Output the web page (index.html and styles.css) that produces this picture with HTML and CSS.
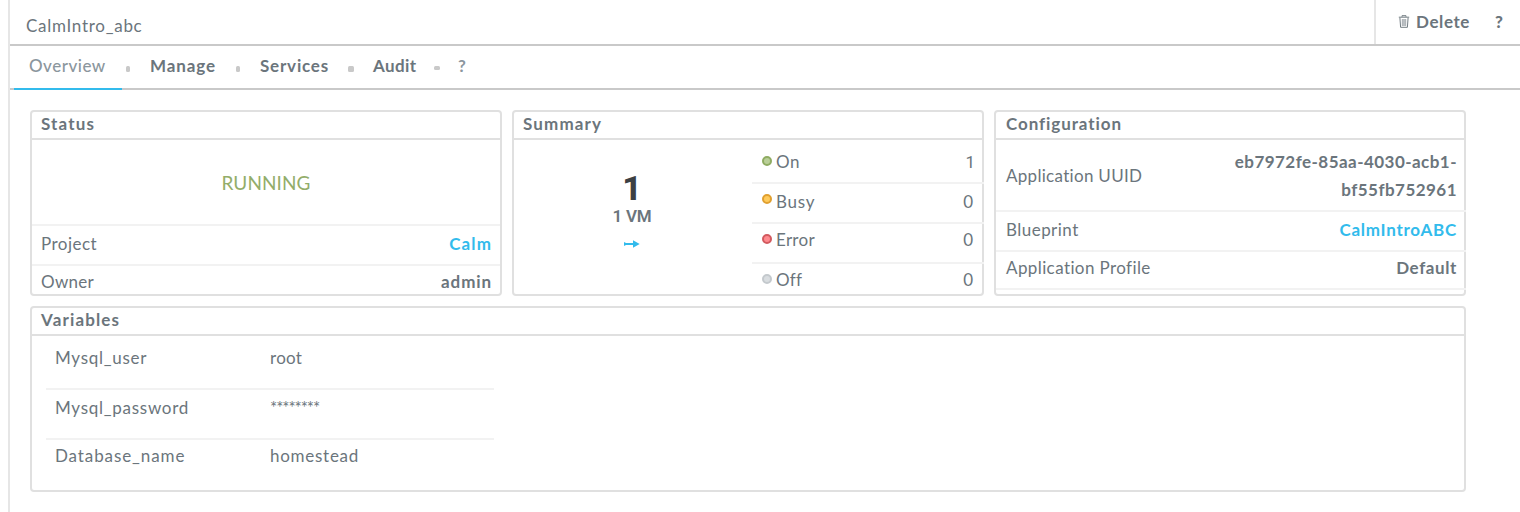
FILE: index.html
```html
<!DOCTYPE html>
<html lang="en">
<head>
<meta charset="utf-8">
<title>CalmIntro_abc</title>
<link rel="stylesheet" href="styles.css">
</head>
<body>
<div class="app">
  <header class="topbar">
    <h1 class="app-name">CalmIntro_abc</h1>
    <div class="actions">
      <svg class="trash" width="12" height="13" viewBox="0 0 12 13" fill="none">
        <path d="M4 1.8V.7h4v1.100M.8 2.200h10.400M1.900 2.800l.7 9.500h6.800l.7-9.500" stroke="#737d83" stroke-width="1"/>
        <path d="M3.700 4h4.600v7H3.700z" fill="#c5c9cb"/>
        <path d="M4.500 4v7M6 4v7M7.500 4v7" stroke="#a3aaae" stroke-width=".6"/>
      </svg>
      <span class="delete">Delete</span>
      <span class="help">?</span>
    </div>
  </header>
  <nav class="tabs">
    <span class="tab active">Overview</span>
    <i class="dot dot-narrow"></i>
    <span class="tab manage">Manage</span>
    <i class="dot dot-narrow"></i>
    <span class="tab services">Services</span>
    <i class="dot dot-square"></i>
    <span class="tab audit">Audit</span>
    <i class="dot dot-flat"></i>
    <span class="tab tab-help">?</span>
  </nav>
  <main class="content">
    <section class="card">
      <h2 class="card-title ls-title">Status</h2>
      <div class="state"><span>RUNNING</span></div>
      <div class="row project"><span class="ls-5">Project</span><b class="link calm">Calm</b></div>
      <div class="row owner"><span class="ls-3">Owner</span><b class="ls-9">admin</b></div>
    </section>
    <section class="card">
      <h2 class="card-title ls-title">Summary</h2>
      <div class="summary">
        <div class="vms">
          <div class="vm-count">1</div>
          <div class="vm-label">1 VM</div>
          <svg class="arrow" width="16" height="8" viewBox="0 0 16 8">
            <path d="M0 2l2 1h7V.3L15.700 4 9 7.700V5H2L0 6z" fill="#32bbec"/>
          </svg>
        </div>
        <div class="counts">
          <div class="row on"><i class="led green"></i><span class="ls-5">On</span><span class="num one">1</span></div>
          <div class="row busy"><i class="led amber"></i><span class="ls-7">Busy</span><span class="num">0</span></div>
          <div class="row error"><i class="led red"></i><span class="ls-3">Error</span><span class="num">0</span></div>
          <div class="row off"><i class="led gray"></i><span class="ls-2">Off</span><span class="num">0</span></div>
        </div>
      </div>
    </section>
    <section class="card config">
      <h2 class="card-title ls-config">Configuration</h2>
      <div class="row uuid"><span class="ls-3">Application UUID</span><b class="ls-5">eb7972fe-85aa-4030-acb1-<br>bf55fb752961</b></div>
      <div class="row blueprint"><span class="ls-5">Blueprint</span><b class="link ls-7">CalmIntroABC</b></div>
      <div class="row profile"><span class="ls-4">Application Profile</span><b>Default</b></div>
    </section>
    <section class="card variables">
      <h2 class="card-title ls-title">Variables</h2>
      <div class="vars">
        <div class="var"><span class="ls-7">Mysql_user</span><span class="ls-3">root</span></div>
        <div class="var"><span class="ls-7">Mysql_password</span><span class="secret">********</span></div>
        <div class="var last"><span class="ls-9">Database_name</span><span class="ls-7">homestead</span></div>
      </div>
    </section>
  </main>
</div>
</body>
</html>
```
FILE: styles.css
```css
* { box-sizing: border-box; }

body {
  margin: 0;
  background: #fff;
  color: #6b757c;
  font: 400 17px/20px Lato, sans-serif;
  letter-spacing: .6px;
}

h1, h2 { margin: 0; font-size: 17px; }

.app {
  height: 512px;
  margin-left: 8px;
  border-left: 2px solid #e6e6e6;
  overflow: hidden;
}

/* Top bar */
.topbar {
  display: flex;
  justify-content: space-between;
  height: 46px;
  border-bottom: 2px solid #c9c9c9;
}
.app-name { padding: 16px 0 0 16px; font-weight: 400; letter-spacing: .72px; }
.actions {
  display: flex;
  align-items: flex-start;
  width: 146px;
  padding: 12px 0 0 22px;
  border-left: 2px solid #e6e6e6;
  font-weight: 700;
}
.trash { margin: 3px 6px 0 0; }
.delete { width: 79px; }
.help { font-weight: 900; }

/* Tabs */
.tabs {
  display: flex;
  align-items: flex-start;
  height: 44px;
  padding-left: 4px;
  border-bottom: 2px solid #c9c9c9;
  font-weight: 700;
}
.tab { padding-top: 10px; }
.tab.active {
  width: 108px;
  height: 44px;
  padding-left: 15px;
  border-bottom: 2px solid #32bbec;
  color: #8b969d;
  font-weight: 500;
  letter-spacing: .5px;
}
.manage { width: 86px; margin-left: 20px; letter-spacing: .9px; }
.services { width: 88px; margin-left: 20px; letter-spacing: .8px; }
.audit { width: 61px; margin-left: 19px; letter-spacing: .4px; }
.tab-help { margin-left: 18px; color: #8b969d; }
.dot { flex: none; margin-top: 20px; border-radius: 1.5px; background: #c9c9c9; }
.dot-narrow { width: 4px; height: 6px; }
.active + .dot { margin-left: 4px; }
.dot-square { width: 6px; height: 6px; }
.dot-flat { width: 6px; height: 4px; }

/* Cards */
.content {
  display: grid;
  grid-template-columns: repeat(3, 472px);
  grid-template-rows: 186px 186px;
  gap: 10px;
  padding: 20px 0 0 20px;
}
.card { border: 2px solid #e0e0e0; border-radius: 4px; }
.variables { grid-column: 1 / -1; width: 1436px; }
.card-title {
  height: 28px;
  padding: 2px 0 0 9px;
  border-bottom: 2px solid #e0e0e0;
}
.row {
  display: flex;
  justify-content: space-between;
  padding: 0 8px 0 9px;
  border-bottom: 2px solid #f2f2f2;
}
.link { color: #32bbec; }
.calm { letter-spacing: 1.1px; }

.state {
  height: 86px;
  padding-top: 33px;
  border-bottom: 2px solid #f2f2f2;
  color: #93ad6a;
  font-size: 19px;
  text-align: center;
  letter-spacing: .1px;
}
.project { height: 40px; padding-top: 8px; }
.owner { height: 28px; padding-top: 6px; border: 0; }

/* Summary */
.summary { display: flex; width: 470px; }
.vms {
  display: flex;
  flex-direction: column;
  align-items: center;
  width: 236px;
  padding-top: 30px;
}
.vm-count { height: 36px; color: #3c4043; font: 800 34px/36px Roboto, sans-serif; letter-spacing: 0; }
.vm-label { font: 600 17px/20px Roboto, sans-serif; letter-spacing: -.2px; }
.arrow { margin-top: 14px; }
.counts { flex: 1; margin-left: 2px; }
.counts .row { justify-content: flex-start; padding: 0 11px 0 10px; }
.led {
  width: 10px;
  height: 10px;
  margin: 4px 4px 0 0;
  border: 2px solid;
  border-radius: 50%;
}
.green { border-color: #8fac62; background: #b9cf98; }
.amber { border-color: #e0a030; background: #ffcb5c; margin-top: 2px; }
.red { border-color: #d25a5f; background: #ff8a8f; margin-top: 4px; }
.gray { border-color: #c4c9cd; background: #d9dde0; }
.num { margin-left: auto; letter-spacing: 0; }
.one { margin-right: -2px; font-family: Roboto, sans-serif; }
.counts .on { height: 44px; padding-top: 12px; }
.counts .busy { height: 40px; padding-top: 8px; }
.counts .error { height: 40px; padding-top: 6px; }
.counts .off { height: 30px; padding-top: 6px; border: 0; }

/* Configuration */
.config .row { width: 470px; padding: 0 9px 0 10px; }
.config .card-title { padding-left: 10px; }
.config .uuid { height: 72px; padding-top: 2px; align-items: center; line-height: 28px; text-align: right; }
.config .blueprint { height: 40px; padding-top: 8px; }
.config .profile { height: 38px; padding-top: 6px; }

/* Variables */
.vars { width: 448px; margin-left: 14px; }
.var {
  display: grid;
  grid-template-columns: 215px 1fr;
  height: 50px;
  padding: 8px 0 0 9px;
  border-bottom: 2px solid #f2f2f2;
}
.var:first-child { height: 54px; padding-top: 12px; }
.var.last { border: 0; padding-top: 6px; }
.secret { letter-spacing: -1.1px; }

/* Tracking */
.ls-2 { letter-spacing: .2px; }
.ls-3 { letter-spacing: .3px; }
.ls-4 { letter-spacing: .4px; }
.ls-5 { letter-spacing: .46px; }
.ls-7 { letter-spacing: .73px; }
.ls-9 { letter-spacing: .9px; }
.ls-title { letter-spacing: 1.15px; }
.ls-config { letter-spacing: .92px; }
```
